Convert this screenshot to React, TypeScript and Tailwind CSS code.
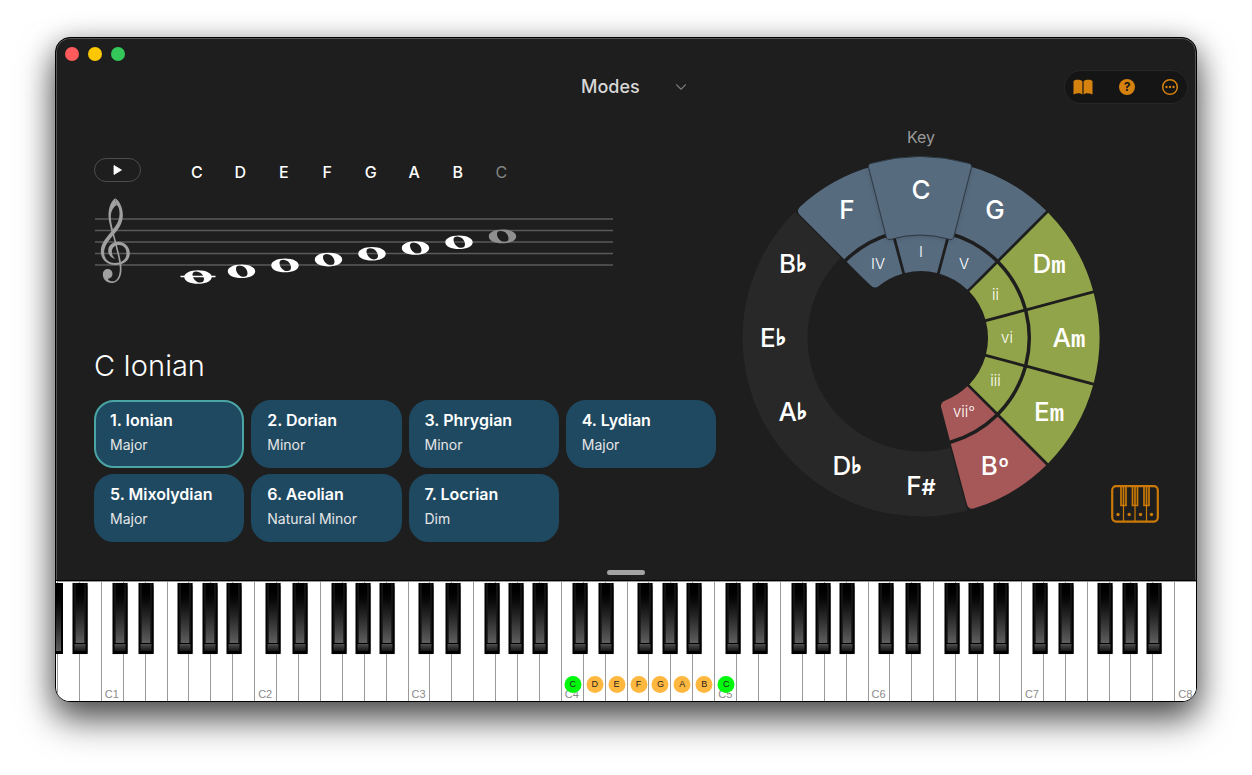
import { ChevronDown } from 'lucide-react'
import clsx from 'clsx'

const modes = [
  { name: '1. Ionian', quality: 'Major' },
  { name: '2. Dorian', quality: 'Minor' },
  { name: '3. Phrygian', quality: 'Minor' },
  { name: '4. Lydian', quality: 'Major' },
  { name: '5. Mixolydian', quality: 'Major' },
  { name: '6. Aeolian', quality: 'Natural Minor' },
  { name: '7. Locrian', quality: 'Dim' }
]

const scale = ['C', 'D', 'E', 'F', 'G', 'A', 'B', 'C']

const BLUE = '#576b7f'
const GREEN = '#92a449'
const RED = '#a65858'

// Angles are clockwise from the top of the wheel
const outerKeys = [
  { root: 'C', angle: 0, color: BLUE },
  { root: 'G', angle: 30, color: BLUE, numeral: 'V' },
  { root: 'D', suffix: 'm', angle: 60, color: GREEN, numeral: 'ii' },
  { root: 'A', suffix: 'm', angle: 90, color: GREEN, numeral: 'vi' },
  { root: 'E', suffix: 'm', angle: 120, color: GREEN, numeral: 'iii' },
  { root: 'B', suffix: 'º', angle: 150, color: RED, numeral: 'vii°' },
  { root: 'F', suffix: '#', angle: 180 },
  { root: 'D', suffix: '♭', angle: 210 },
  { root: 'A', suffix: '♭', angle: 240 },
  { root: 'E', suffix: '♭', angle: 270 },
  { root: 'B', suffix: '♭', angle: 300 },
  { root: 'F', angle: 330, color: BLUE, numeral: 'IV' }
]

const whiteNotes = ['C', 'D', 'E', 'F', 'G', 'A', 'B']

// 52 white keys, A0 to C8
const pianoKeys = Array.from({ length: 52 }, (_, i) => ({
  note: whiteNotes[(i + 5) % 7],
  octave: Math.floor((i + 5) / 7),
  dot: i >= 23 && i <= 30
}))

const blackKeyOffset: Record<string, string> = {
  C: 'left-[86%]',
  D: 'left-[107%]',
  F: 'left-[86%]',
  G: 'left-[97%]',
  A: 'left-[107%]'
}

function polar(r: number, deg: number) {
  const a = (deg * Math.PI) / 180
  return [r * Math.sin(a), -r * Math.cos(a)]
}

type Corner = 'startOuter' | 'startInner' | 'endOuter' | 'endInner'

function wedge(r0: number, r1: number, from: number, to: number, round?: Corner) {
  const gap = 1.4
  const size = 6
  const pt = (r: number, side: 1 | -1, dr = 0, along = 0) => {
    const base = side === 1 ? from : to
    return polar(r + dr, base + (side * (gap + along) * 180) / (Math.PI * r)).join(' ')
  }
  const corner = (name: Corner, r: number, side: 1 | -1, dr: number, arcFirst: boolean) => {
    if (round !== name) return `L ${pt(r, side)}`
    const radial = pt(r, side, dr)
    const onArc = pt(r, side, 0, size)
    return arcFirst
      ? `L ${onArc} Q ${pt(r, side)} ${radial}`
      : `L ${radial} Q ${pt(r, side)} ${onArc}`
  }
  const outerEnd = round === 'endOuter' ? pt(r1, -1, 0, size) : pt(r1, -1)
  const innerStart = round === 'startInner' ? pt(r0, 1, 0, size) : pt(r0, 1)
  return [
    `M ${pt((r0 + r1) / 2, 1)}`,
    corner('startOuter', r1, 1, -size, false),
    `A ${r1} ${r1} 0 0 1 ${outerEnd}`,
    corner('endOuter', r1, -1, -size, true),
    corner('endInner', r0, -1, size, false),
    `A ${r0} ${r0} 0 0 0 ${innerStart}`,
    corner('startInner', r0, 1, size, true),
    'Z'
  ].join(' ')
}

function ring(r0: number, r1: number, from: number, to: number) {
  const [a, b, c, d] = [polar(r1, from), polar(r1, to), polar(r0, to), polar(r0, from)]
  return `M ${a} A ${r1} ${r1} 0 0 1 ${b} L ${c} A ${r0} ${r0} 0 0 0 ${d} Z`
}

function suffixStyle(suffix: string) {
  if (suffix === 'm') return "font-['Liberation_Mono'] font-bold text-[24px]"
  if (suffix === '♭') return "font-['DejaVu_Sans'] text-[22px] stroke-white stroke-[1.4px]"
  if (suffix === '#') return 'font-semibold text-[22px]'
  return 'font-semibold text-[24px]'
}

function KeyWheel() {
  return (
    <svg viewBox="-179 -182 358 362" className="w-full" role="img" aria-label="Circle of fifths">
      <path d={ring(113.5, 178.5, 165, 315)} fill="#282828" />
      {outerKeys.map(({ root, angle, color, numeral }) => {
        if (!color || !numeral) return null
        return (
          <g key={root + angle} fill={color}>
            <path
              d={wedge(
                110,
                178.5,
                angle - 15,
                angle + 15,
                numeral === 'IV' ? 'startOuter' : numeral === 'vii°' ? 'endOuter' : undefined
              )}
            />
            <path
              d={wedge(
                67,
                106.5,
                angle - 15,
                angle + 15,
                numeral === 'IV' ? 'startInner' : numeral === 'vii°' ? 'endInner' : undefined
              )}
            />
          </g>
        )
      })}
      <path d={wedge(67, 106.5, -15, 15)} fill={BLUE} />
      {/* Selected key, raised above its neighbours */}
      <path
        d="M-50.5 -174.5 A181 181 0 0 1 48.5 -174.5 Q51 -173.5 50.5 -171 L32.5 -100 Q31.5 -98 29 -98.5 A104 104 0 0 0 -31 -98.5 Q-33.5 -98 -34.5 -100 L-52.5 -171 Q-53 -173.5 -50.5 -174.5 Z"
        fill={BLUE}
        stroke="#2d3741"
        strokeWidth="1"
        className="drop-shadow-sm"
      />
      <g fill="#ffffff" textAnchor="middle" className="font-['Inter',sans-serif]">
        {outerKeys.map(({ root, suffix, angle }) => {
          const [x, y] = polar(148, angle)
          return (
            <text key={root + angle} x={x} y={y + 9} className="text-[26px] font-medium">
              {root}
              {suffix && (
                <tspan className={suffixStyle(suffix)} dy={suffix === '♭' ? -2 : 0}>
                  {suffix}
                </tspan>
              )}
            </text>
          )
        })}
        {outerKeys.map(({ angle, numeral, color }) => {
          if (!color) return null
          const [x, y] = polar(86, angle)
          return (
            <text key={angle} x={x} y={y + 5} className="text-[15px] font-light">
              {numeral ?? 'I'}
            </text>
          )
        })}
      </g>
    </svg>
  )
}

function TrebleClef() {
  return (
    <g fill="#a0a0a0" transform="translate(-14.5 -5) scale(0.3333)">
      <path d="M104 25 C117 32 128 55 127 78 C126 104 110 122 98 136 C82 154 71 170 71 188 C71 208 86 219 103 219 C122 219 138 210 138 190 C138 174 128 165 115 165 C102 165 94 174 94 186 C94 196 99 202 105 207 C92 204 83 194 83 182 C83 166 96 155 113 155 C134 155 148 171 148 190 C148 211 130 225 104 225 C80 225 61 209 61 184 C61 161 75 146 89 129 C103 111 117 96 117 72 C117 58 114 48 108 46 Z" />
      <path d="M104 25 C92 34 84 52 84 75 C84 100 95 128 100 148 L113 200 C115 212 118 224 118 236 C118 258 110 274 96 274 C90 274 84 272 82 266 C90 266 96 260 96 252 C96 244 91 237 82 237 C74 237 67 243 67 253 C67 268 78 279 94 279 C112 279 124 262 123 235 C123 222 121 215 118 200 L104 145 C99 125 91 98 91 80 C91 66 97 52 108 46 Z" />
    </g>
  )
}

function Staff() {
  return (
    <svg viewBox="-1 -1 520 92" className="w-[520px]" role="img" aria-label="C Ionian on the treble staff">
      {[24, 35.5, 47, 58.5, 70].map((y) => (
        <line key={y} x1="0" x2="518" y1={y} y2={y} stroke="#5a5a5a" strokeWidth="1.6" />
      ))}
      <TrebleClef />
      {scale.map((_, i) => (
        <g key={i} transform={`translate(${103 + i * 43.5} ${82 - i * 5.8})`}>
          <path
            fillRule="evenodd"
            fill={i === 7 ? '#8f8f8f' : '#ffffff'}
            d="M-13.7 0 C-13.7 -4 -8 -6.8 0 -6.8 C8 -6.8 13.7 -4 13.7 0 C13.7 4 8 6.8 0 6.8 C-8 6.8 -13.7 4 -13.7 0 Z M-5.5 -2.5 C-5.5 1.5 -2 5.6 2.2 5.6 C4.6 5.6 6 4.3 6 2.3 C6 -2 2.2 -5.6 -1.8 -5.6 C-4.2 -5.6 -5.5 -4.5 -5.5 -2.5 Z"
          />
          {i === 0 && <path d="M-17.5 -0.5 H17.5" stroke="#ffffff" strokeWidth="1.6" />}
        </g>
      ))}
    </svg>
  )
}

function Piano() {
  return (
    <div className="flex h-[121px] border-t border-black bg-white pl-px">
      {pianoKeys.map(({ note, octave, dot }, i) => (
        <div key={i} className="relative flex-1 border-t border-t-[#999999]">
          <button
            aria-label={`${note}${octave}`}
            className="flex h-full w-full items-end border-l border-[#9a9a9a] bg-white pb-px pl-[3px] font-['Liberation_Sans',sans-serif] text-[11px] leading-3 text-[#8a8a8a]"
          >
            {note === 'C' && <span>{`C${octave}`}</span>}
          </button>
          {dot && (
            <span
              className={clsx(
                "absolute bottom-2 left-[calc(50%+1px)] z-10 flex size-[17px] -translate-x-1/2 items-center justify-center rounded-full font-['Liberation_Sans',sans-serif] text-[9px] text-[#222222]",
                note === 'C' ? 'bg-[#00f80c]' : 'bg-[#ffb83f]'
              )}
            >
              {note}
            </span>
          )}
          {i === 0 && (
            <span className="absolute -left-px top-px z-10 h-[71px] w-[7px] border-b-[3px] border-r-2 border-black bg-linear-to-b from-black to-[#5a5a5a]" />
          )}
          {blackKeyOffset[note] && i < 51 && (
            <button
              aria-label={`${note}♯${octave}`}
              className={clsx(
                'absolute top-px z-10 flex h-[71px] w-[15px] -translate-x-1/2 flex-col bg-black px-[2px] pb-[3px] shadow-[0_0_1px_#777777]',
                blackKeyOffset[note]
              )}
            >
              <span className="w-full flex-1 border-x border-[#222222] bg-linear-to-b from-black to-[#5f5f5f]" />
              <span className="mt-px h-[7px] w-full bg-linear-to-b from-[#505050] to-[#161616]" />
            </button>
          )}
        </div>
      ))}
    </div>
  )
}

export default function App() {
  return (
    <div className="bg-white px-[55px] pb-[73px] pt-[37px] font-['Inter',sans-serif]">
      <div className="overflow-hidden rounded-[15px] border border-black bg-[#1e1e1e] text-white shadow-[inset_0_0_0_1px_#555555,0_18px_36px_rgba(0,0,0,0.6),0_6px_28px_rgba(0,0,0,0.3)]">
        <div className="flex gap-[9px] px-[9px] pt-[9px]">
          <button aria-label="Close" className="size-[14px] rounded-full bg-[#ff5b5c]" />
          <button aria-label="Minimize" className="size-[14px] rounded-full bg-[#fbc700]" />
          <button aria-label="Zoom" className="size-[14px] rounded-full bg-[#34c759]" />
        </div>

        <header className="mt-[9px] grid grid-cols-[1fr_auto_1fr] items-center px-2">
          <div className="relative col-start-2 flex items-center">
            <select
              aria-label="View"
              className="w-[132px] appearance-none bg-transparent pl-[21px] text-[18px] leading-8 font-medium text-[#d8d8d8]"
            >
              <option>Modes</option>
            </select>
            <ChevronDown className="pointer-events-none absolute right-0.5 size-[18px] text-[#77777c]" strokeWidth={1.5} />
          </div>
          <div className="flex h-[34px] w-[124px] items-center justify-between justify-self-end rounded-full border border-[#272727] bg-[#151515] px-2 text-[#d6820f]">
            <button aria-label="Guide">
              <svg viewBox="0 0 20 16" className="h-4 w-5" fill="currentColor">
                <path d="M0.5 2 C2.5 0.3 7 0.3 9.4 2.2 V15.5 C7.5 14 3.5 13.8 1.4 15.3 C0.9 15.6 0.5 15.4 0.5 14.8 Z" />
                <path d="M19.5 2 C17.5 0.3 13 0.3 10.6 2.2 V15.5 C12.5 14 16.5 13.8 18.6 15.3 C19.1 15.6 19.5 15.4 19.5 14.8 Z" />
              </svg>
            </button>
            <button aria-label="Help" className="flex size-4 items-center justify-center rounded-full bg-[#d6820f] text-[12px] font-bold text-[#151515]">
              ?
            </button>
            <button aria-label="More">
              <svg viewBox="0 0 18 18" className="size-[18px]" fill="currentColor">
                <circle cx="9" cy="9" r="7.3" fill="none" stroke="currentColor" strokeWidth="1.5" />
                <circle cx="5.5" cy="9" r="1.2" />
                <circle cx="9" cy="9" r="1.2" />
                <circle cx="12.5" cy="9" r="1.2" />
              </svg>
            </button>
          </div>
        </header>

        <main className="flex pl-[38px] pr-[37px] pt-[23px]">
          <section className="flex-1 pt-[31px]">
            <div className="flex items-center">
              <button aria-label="Play" className="flex h-6 w-[47px] items-center justify-center rounded-full border border-[#4c4c4c]">
                <svg viewBox="0 0 9 10" className="h-[10px] w-[9px]" fill="#ffffff">
                  <path d="M1 0.5 L8.5 5 L1 9.5 Z" stroke="#ffffff" strokeWidth="0.8" strokeLinejoin="round" />
                </svg>
              </button>
              <div className="ml-[34px] mt-1 grid w-[348px] grid-cols-8 text-center text-[16px] leading-5 font-medium">
                {scale.map((note, i) => (
                  <span key={i} className={i === 7 ? 'font-normal text-[#858585]' : 'text-white'}>
                    {note}
                  </span>
                ))}
              </div>
            </div>

            <div className="mt-3">
              <Staff />
            </div>

            <h1 className="mt-[60px] text-[29px] leading-10 font-light">C Ionian</h1>

            <div className="mt-[14px] grid grid-cols-4 gap-x-[7px] gap-y-[6px]">
              {modes.map((mode, i) => (
                <button
                  key={mode.name}
                  className={clsx(
                    'flex h-[68px] flex-col rounded-[20px] border-2 bg-[#1e4961] px-[14px] pt-[6px] text-left',
                    i === 0 ? 'border-[#4ba5a4]' : 'border-[#1e4961]'
                  )}
                >
                  <span className="text-[16px] leading-6 font-semibold">{mode.name}</span>
                  <span className="text-[14px] leading-[26px] text-[#e6e6e6]">{mode.quality}</span>
                </button>
              ))}
            </div>
          </section>

          <section className="ml-[26px] w-[358px] text-center">
            <h2 className="text-[16px] leading-5 text-[#9a9a9a]">Key</h2>
            <div className="mt-[9px]">
              <KeyWheel />
            </div>
          </section>

          <button aria-label="Toggle keyboard" className="mb-[19px] ml-[11px] self-end">
            <svg viewBox="0 0 48 38" className="h-[38px] w-12" fill="none" stroke="#cb7a07">
              <rect x="1.2" y="1.2" width="45.6" height="35.4" rx="4" strokeWidth="2.2" />
              <path d="M12.5 21 V36 M24 21 V36 M35.5 21 V36" strokeWidth="1.2" />
              <path
                d="M10 2 V20.5 H15 V2 M12.5 2 V20 M21.5 2 V20.5 H26.5 V2 M24 2 V20 M33 2 V20.5 H38 V2 M35.5 2 V20"
                strokeWidth="1.7"
              />
              <g fill="#cb7a07" stroke="none">
                <circle cx="7" cy="29.5" r="1.7" />
                <circle cx="18.2" cy="29.5" r="1.7" />
                <circle cx="29.5" cy="29.5" r="1.7" />
                <circle cx="40.5" cy="29.5" r="1.7" />
              </g>
            </svg>
          </button>
        </main>

        <div className="flex justify-center pb-[5px] pt-7">
          <div className="h-[5px] w-[38px] rounded-full bg-[#a3a3a3]" />
        </div>

        <Piano />
      </div>
    </div>
  )
}
